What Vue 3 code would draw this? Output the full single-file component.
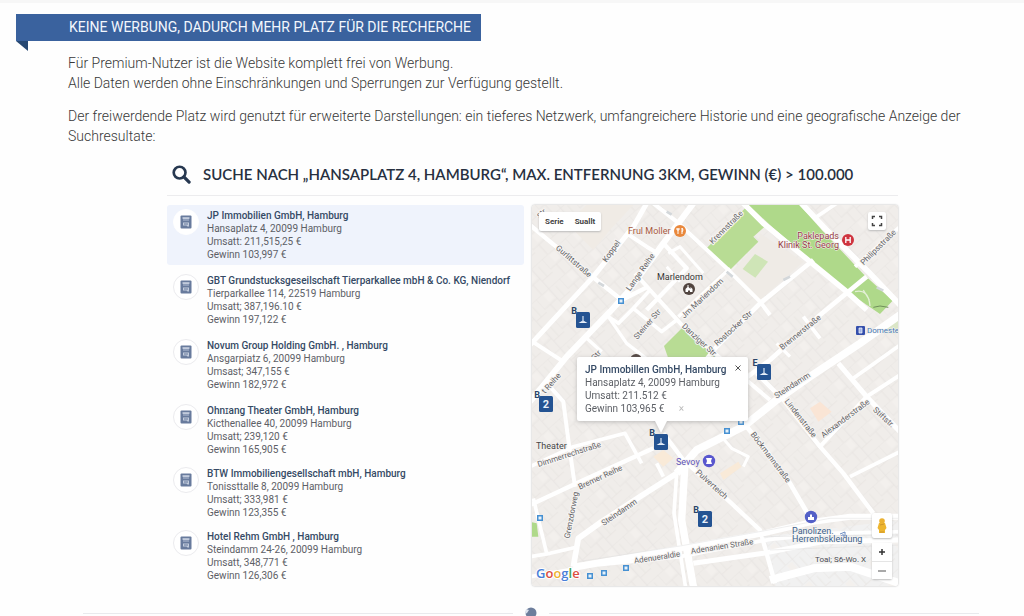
<script setup>
const companies = [
  { name: 'JP Immobilien GmbH, Hamburg', address: 'Hansaplatz 4, 20099 Hamburg', revenue: 'Umsatt: 211,515,25 €', profit: 'Gewinn 103,997 €', active: true },
  { name: 'GBT Grundstucksgeseilschaft Tierparkallee mbH & Co. KG, Niendorf', address: 'Tierparkallee 114, 22519 Hamburg', revenue: 'Umsatt; 387,196.10 €', profit: 'Gewinn 197,122 €' },
  { name: 'Novum Group Holding GmbH. , Hamburg', address: 'Ansgarpiatz 6, 20099 Hamburg', revenue: 'Umsast; 347,155 €', profit: 'Gewinn 182,972 €' },
  { name: 'Ohnɪang Theater GmbH, Hamburg', address: 'Kicthenallee 40, 20099 Hamburg', revenue: 'Umsatt; 239,120 €', profit: 'Gewinn 165,905 €' },
  { name: 'BTW Immobiliengesellschaft mbH, Hamburg', address: 'Tonissttalle 8, 20099 Hamburg', revenue: 'Umsatt; 333,981 €', profit: 'Gewinn 123,355 €' },
  { name: 'Hotel Rehm GmbH , Hamburg', address: 'Steindamm 24-26, 20099 Hamburg', revenue: 'Umsatt, 348,771 €', profit: 'Gewinn 126,306 €' },
]

const roads = [
  { w: 18, d: 'M0 605L110 470L240 335L290 280L400 130L490 10' },
  { w: 15, d: 'M0 435L60 370L190 230L310 80L350 10' },
  { w: 13, d: 'M0 75L60 125L200 240L275 300L350 262' },
  { w: 12, d: 'M290 100L350 140M350 140L375 155' },
  { w: 12, d: 'M370 10L440 65L590 205L690 305L720 345' },
  { w: 13, d: 'M400 130L470 205L350 330' },
  { w: 9, d: 'M415 160L450 140L520 220M410 200L450 245' },
  { w: 12, d: 'M315 220L360 270L460 380L560 465L720 600' },
  { w: 11, d: 'M360 270L310 325L265 370L235 350M310 325L395 395L440 360' },
  { w: 10, d: 'M235 350L290 430L380 500M170 415L215 455' },
  { w: 12, d: 'M0 420L100 485' },
  { w: 14, d: 'M480 540L560 440L690 310L850 180' },
  { w: 10, d: 'M445 350L600 205M740 430L780 470' },
  { w: 14, d: 'M640 540L720 480L870 345L1010 230' },
  { w: 16, d: 'M625 -5L700 70L950 275L1010 330' },
  { w: 17, d: 'M800 -5L880 80L1015 215L1110 315' },
  { w: 11, d: 'M975 200L1110 80M860 50L920 10' },
  { w: 23, d: 'M440 820L500 750L640 680L740 600L840 530L990 430L1110 345' },
  { w: 17, d: 'M440 820L330 890L215 965L145 1015L130 1100' },
  { w: 22, d: 'M465 790L455 960L492 1170' },
  { w: 11, d: 'M440 820L432 940L468 1170' },
  { w: 13, d: 'M400 700L460 780L540 850L690 990L735 1150' },
  { w: 14, d: 'M650 680L700 740L780 850L850 970' },
  { w: 13, d: 'M680 520L760 600L870 740L940 820L1030 940' },
  { w: 12, d: 'M870 740L1010 590L1110 525' },
  { w: 15, d: 'M925 490L1010 590L1110 695' },
  { w: 11, d: 'M970 535L1110 435M960 830L1110 755M820 350L870 415' },
  { w: 13, d: 'M0 915L140 850L370 745' },
  { w: 11, d: 'M0 800L130 740L285 700L335 790M380 790L400 830' },
  { w: 12, d: 'M60 560L100 605L115 720L135 860' },
  { w: 11, d: 'M10 895L50 1060M0 1070L60 1060L145 1040' },
  { w: 18, d: 'M130 1100L280 1075L450 1045L700 1000L850 965L960 950L1110 950' },
  { w: 11, d: 'M0 1130L200 1095L450 1070L720 1018L900 1000L1110 995' },
  { w: 15, d: 'M490 1090L700 1060L880 1025L1110 1020' },
  { w: 24, d: 'M720 1140L850 1105L960 1100L1110 1150' },
  { w: 9, d: 'M570 705L605 745L655 770L640 800' },
]

const labels = [
  { t: 'Gurlittstraße', x: 42, y: 56, r: 41 },
  { t: 'Koppel', x: 79, y: 46, r: -55 },
  { t: 'Lange Reihe', x: 108, y: 67, r: -55 },
  { t: 'Krennstraße', x: 194, y: 22, r: -45 },
  { t: 'Jm Mariendom', x: 170, y: 93, r: -43 },
  { t: 'Steiner Str', x: 115, y: 119, r: -49 },
  { t: 'Danziger Str.', x: 168, y: 135, r: 43 },
  { t: 'Rostocker Str', x: 201, y: 123, r: -42 },
  { t: 'Brennerstraße', x: 268, y: 127, r: -39 },
  { t: 'Philipsstraße', x: 346, y: 42, r: -45 },
  { t: 't Reihe', x: 19, y: 178, r: -48 },
  { t: 'Str', x: 64, y: 150, r: -48 },
  { t: 'Steindamm', x: 260, y: 180, r: -33 },
  { t: 'Lindenstraße', x: 269, y: 213, r: 52 },
  { t: 'Alexanderstraße', x: 313, y: 213, r: -37 },
  { t: 'Stiftstr.', x: 352, y: 212, r: 42 },
  { t: 'Böckmannstraße', x: 239, y: 252, r: 53 },
  { t: 'Dimmerrechstraße', x: 37, y: 249, r: -18 },
  { t: 'Bremer Reihe', x: 68, y: 272, r: -25 },
  { t: 'Steindamm', x: 87, y: 307, r: -34 },
  { t: 'Grenzdorweg', x: 39, y: 310, r: -79 },
  { t: 'Pulverteich', x: 180, y: 279, r: 42 },
  { t: 'Adenueraldie', x: 125, y: 352, r: -9 },
  { t: 'Adenanien Straße', x: 190, y: 341, r: -9 },
  { t: 'str', x: 9, y: 8, r: -38 },
]

const pins = [
  { x: 51, y: 115, letter: 'B' },
  { x: 14, y: 199, letter: 'B', digit: '2' },
  { x: 232, y: 167, letter: 'E' },
  { x: 129, y: 237, letter: 'B' },
  { x: 173, y: 314, letter: 'B', digit: '2' },
]

const stops = [[89, 96], [209, 217], [195, 226], [8, 313], [94, 363], [72, 368], [58, 371]]
</script>

<template>
  <main class="page">
    <h2 class="ribbon">KEINE WERBUNG, DADURCH MEHR PLATZ FÜR DIE RECHERCHE</h2>

    <section class="intro">
      <p>Für Premium-Nutzer ist die Website komplett frei von Werbung.<br>Alle Daten werden ohne Einschränkungen und Sperrungen zur Verfügung gestellt.</p>
      <p>Der freiwerdende Platz wird genutzt für erweiterte Darstellungen: ein tieferes Netzwerk, umfangreichere Historie und eine geografische Anzeige der Suchresultate:</p>
    </section>

    <section class="search">
      <header class="search-head">
        <svg class="lens" viewBox="0 0 20 20" aria-hidden="true">
          <circle cx="8" cy="8" r="6.2" fill="none" stroke="#273850" stroke-width="2.8" />
          <path d="M12.5 12.5L18 18" stroke="#273850" stroke-width="3.4" stroke-linecap="round" />
        </svg>
        <h1>SUCHE NACH „HANSAPLATZ 4, HAMBURG“, MAX. ENTFERNUNG 3KM, GEWINN (€) &gt; 100.000</h1>
      </header>

      <div class="results">
        <ul class="list">
          <li v-for="c in companies" :key="c.name" class="company" :class="{ active: c.active }">
            <span class="badge">
              <svg viewBox="0 0 12 14" aria-hidden="true">
                <rect x=".5" y=".5" width="11" height="13" rx="1" fill="#687b9d" />
                <path d="M3 3H9V6H3Z" fill="#8e9db9" />
                <path d="M2.500 3H9.500" stroke="#e4e9f3" stroke-width="1.200" />
                <path d="M3 7.500H9V11.500H7.500L6.500 10.500H3Z" fill="#c3cddd" />
                <path d="M4 9H8" stroke="#687b9d" />
              </svg>
            </span>
            <div class="facts">
              <strong>{{ c.name }}</strong>
              <span>{{ c.address }}</span>
              <span>{{ c.revenue }}</span>
              <span>{{ c.profit }}</span>
            </div>
          </li>
        </ul>

        <div class="map">
          <svg class="canvas" viewBox="0 0 366 381" preserveAspectRatio="xMidYMid slice" role="img" aria-label="Karte Hamburg">
            <defs>
              <pattern id="plots" width="94" height="78" patternUnits="userSpaceOnUse" patternTransform="rotate(-42)">
                <path d="M0 0H94M0 39H52M52 0V78M24 39V78M73 10V50M52 50H94M0 0V39" fill="none" stroke="#e6e2df" stroke-width="2" />
                <rect x="26" y="6" width="20" height="26" fill="#f3f0ed" />
              </pattern>
            </defs>
            <g transform="scale(.33333) translate(-6 -15)">
              <rect x="0" y="0" width="1120" height="1180" fill="#f0edea" />
              <path d="M700 1010L1110 960V1170H740Z" fill="#f1f1f1" />
              <rect x="0" y="0" width="1120" height="1180" fill="url(#plots)" />
              <path d="M840 625L870 605L905 635L865 665Z" fill="#fae5d5" />
              <path d="M570 820L625 785L635 800L580 840ZM370 770L400 750L430 775L400 800Z" fill="#f9ead8" />
              <path d="M240 90L310 15H170L110 70L190 150Z" fill="#f0ebe5" />
              <path d="M690 100L820 185L690 300L605 215L685 125Z" fill="#efebe6" />
              <path d="M645 25L710 75L670 110L685 125L600 210L530 145Z" fill="#b8dc94" />
              <path d="M675 162L714 185L676 233L638 207Z" fill="#cfe5b7" />
              <path d="M650 10H805L880 95L1000 222L1088 302L1050 342L945 270L720 75Z" fill="#afd98a" />
              <path d="M460 380L560 468L520 490H420L402 438Z" fill="#b8dc94" />
              <path d="M0 965L20 970L25 1010H0Z" fill="#afd98a" />
              <path d="M1060 385L1110 350V400L1065 400Z" fill="#dbe6c7" />
              <path v-for="r in roads" :key="r.d" :d="r.d" :stroke-width="r.w" fill="none" stroke="#fff" stroke-linejoin="round" />
              <path d="M145 1085L450 1038L700 993L900 955H1110M700 1010L1110 1005M720 1050L1110 1035" fill="none" stroke="#dfdede" stroke-width="1.500" />
              <path d="M975 275Q1015 265 1020 318M1000 270L1018 300" fill="none" stroke="#e4f0d7" stroke-width="4" />
              <path d="M1030 322L1050 318L1075 322" fill="none" stroke="#6f8f5a" stroke-width="3" />
              <path d="M590 215L608 230M760 240L780 230M1040 262L1060 272M205 248L222 258M410 35L425 44" stroke="#d3d7da" stroke-width="8" />
            </g>

            <g class="streets">
              <text v-for="l in labels" :key="l.t + l.x" :transform="`translate(${l.x} ${l.y}) rotate(${l.r})`" dy="3">{{ l.t }}</text>
            </g>

            <g v-for="s in stops" :key="s.join()">
              <rect :x="s[0] - 3" :y="s[1] - 3" width="6" height="6" fill="#4690d2" />
              <rect :x="s[0] - 1.5" :y="s[1] - 1.5" width="3" height="3" fill="#e6f1fa" />
            </g>

            <g class="places">
              <text x="96" y="29" fill="#a8593e">Frul Moller</text>
              <text x="125" y="75" fill="#353535">Marlendom</text>
              <text x="307" y="34" text-anchor="end" fill="#963c44">Paklepads</text>
              <text x="307" y="43" text-anchor="end" fill="#963c44">Klinik St. Georg</text>
              <text x="335" y="128" class="small" fill="#4779b5">Domeste</text>
              <text x="4" y="244" fill="#454545">Theater</text>
              <text x="144" y="260" fill="#6254b8">Sevoy</text>
              <text x="260" y="329" fill="#41638c">Panolizen.</text>
              <text x="260" y="337" fill="#41638c">Herrenbskleidung</text>
              <text x="283" y="357" class="small" fill="#484c53">Toal; S6-Wo. X</text>
            </g>
            <g>
              <circle cx="148" cy="26" r="6" fill="#e9883c" />
              <path d="M146 23V29M145 23V25H147V23M150 29V23Q152 25 150 27" fill="none" stroke="#fff" />
              <circle cx="157" cy="84" r="6" fill="#51443f" />
              <path d="M153.500 87V84L155.500 82V80H156.500V82L158.500 84V82L160.500 84V87H158V85.500H156V87Z" fill="#fff" />
              <circle cx="104" cy="155" r="6" fill="#51443f" />
              <circle cx="316" cy="35" r="6" fill="#cf3540" />
              <path d="M313.800 32V38M318.200 32V38M314 35H318" stroke="#fff" stroke-width="1.300" />
              <rect x="324" y="121" width="9" height="9" rx="1" fill="#354fac" />
              <path d="M327 123H330V128H327Z" fill="#9fb3e5" stroke="#fff" stroke-width=".7" />
              <circle cx="177" cy="256" r="6.200" fill="#5957ce" />
              <path d="M174 253H180L179 256L180 259H174L175 256Z" fill="#fff" />
              <circle cx="279" cy="312" r="6.200" fill="#5360c7" />
              <path d="M276 312H282V315H276ZM278 312V310L279 309L280 310V312" fill="#fff" />
              <path d="M308 329L313 327V331H311V329" fill="none" stroke="#6a8bc0" />
            </g>
            <g v-for="p in pins" :key="p.x" :transform="`translate(${p.x} ${p.y})`">
              <rect x="-7" y="-8" width="14" height="16" rx="1.500" fill="#245392" />
              <text v-if="p.digit" y="4" class="digit">{{ p.digit }}</text>
              <path v-else d="M0 -4V1L-2.500 2.500H2.500L0 1" fill="none" stroke="#e8f0fa" stroke-width="1.100" />
              <text x="-9" y="-6" class="pin-letter">{{ p.letter }}</text>
            </g>
          </svg>

          <div class="map-types">
            <button type="button">Serie</button>
            <button type="button">Suallt</button>
          </div>
          <button type="button" class="tool full" aria-label="Vollbild">
            <svg viewBox="0 0 12 12" aria-hidden="true"><path d="M1.500 4V1.500H4M8 1.500H10.500V4M10.500 8V10.500H8M4 10.500H1.500V8" fill="none" stroke="#444" stroke-width="1.500" /></svg>
          </button>
          <div class="tools">
            <button type="button" class="tool person" aria-label="Street View">
              <svg viewBox="0 0 12 18" aria-hidden="true"><circle cx="6" cy="4" r="2.800" fill="#eab132" /><path d="M3 6H9L10.500 11L9 13V16H3V13L1.500 11Z" fill="#edb52f" /><path d="M4 8L8 7M4 15H8" stroke="#ce962c" /></svg>
            </button>
            <div class="zoom">
              <button type="button" aria-label="Vergrößern"><svg viewBox="0 0 10 10" aria-hidden="true"><path d="M2 5H8M5 2V8" stroke="#333" stroke-width="1.500" /></svg></button>
              <button type="button" aria-label="Verkleinern"><svg viewBox="0 0 10 10" aria-hidden="true"><path d="M1 5H9" stroke="#555" stroke-width="1.200" /></svg></button>
            </div>
          </div>
          <div class="google"><i class="b">G</i><i class="r">o</i><i class="y">o</i><i class="b">g</i><i class="g">l</i><i class="r">e</i></div>

          <div class="popup">
            <strong>JP Immobillen GmbH, Hamburg</strong>
            <span>Hansaplatz 4, 20099 Hamburg</span>
            <span>Umsatt: 211.512 €</span>
            <span>Gewinn 103,965 € <em>×</em></span>
            <button type="button" aria-label="Schließen"><svg viewBox="0 0 8 8" aria-hidden="true"><path d="M1.500 1.500L6.500 6.500M6.500 1.500L1.500 6.500" stroke="#555" /></svg></button>
          </div>
        </div>
      </div>
    </section>

    <footer class="divider">
      <svg viewBox="0 0 12 12" aria-hidden="true"><circle cx="6" cy="6" r="5.500" fill="#6d7e9c" /><path d="M0 7L1 2L4 3L2 6Z" fill="#dce3ee" /></svg>
    </footer>
  </main>
</template>

<style>
html, body { background: #fefefe; overflow: hidden; }
</style>

<style scoped>
.page { font-family: Roboto, "Liberation Sans", sans-serif; color: #383838; border-top: 3px solid #f7f7f7; }
.page * { box-sizing: border-box; }
h1, h2, p, ul { margin: 0; padding: 0; }
button { border: 0; padding: 0; background: #fff; font-family: inherit; display: grid; place-items: center; }

.ribbon { position: relative; width: max-content; margin: 11px 0 0 16px; padding: 0 10px 0 53px; background: #3a629e; color: #f3f7fd; font-size: 14px; font-weight: 400; line-height: 27px; }
.ribbon::after { content: ""; position: absolute; left: 0; top: 100%; border: solid transparent; border-width: 0 12px 10px 0; border-right-color: #274873; }

.intro { margin: 12px 52px 0 68px; font-size: 14px; font-weight: 300; line-height: 20px; }
.intro p + p { margin-top: 13px; }

.search { margin: 13px 126px 0 167px; }
.search-head { display: flex; align-items: center; gap: 12px; height: 37px; padding: 0 0 6px 5px; border-bottom: 1px solid #ececee; }
.lens { width: 19px; height: 19px; flex: none; }
h1 { font: 600 15px/20px Lato, sans-serif; color: #273040; white-space: nowrap; }

.results { display: grid; grid-template-columns: 357fr 366fr; gap: 8px; margin-top: 9px; }
.list { list-style: none; }
.company { display: flex; gap: 8px; padding: 4px 6px; margin-bottom: 5px; border-radius: 3px; height: 60px; }
.company:nth-child(n + 4) { margin-bottom: 3px; }
.company:last-child { margin-bottom: 0; }
.company.active { background: #eff3fc; }
.badge { width: 26px; height: 26px; flex: none; border: 1px solid #ebebee; border-radius: 50%; background: #fff; display: grid; place-items: center; }
.active .badge { border-color: #fff; }
.badge svg { width: 12px; height: 14px; }
.facts, .popup { display: flex; flex-direction: column; font-size: 10px; line-height: 13px; white-space: nowrap; color: #5d6066; }
strong { font-weight: 500; color: #354a65; }

.map { position: relative; overflow: hidden; min-height: 381px; border-radius: 3px; box-shadow: 0 0 2px #aaa; }
.canvas { position: absolute; inset: 0; width: 100%; height: 100%; }
.streets text { font-size: 8px; text-anchor: middle; fill: #636366; paint-order: stroke; stroke: #f7f5f3; stroke-width: 2px; }
.places text { font-size: 9px; font-weight: 400; paint-order: stroke; stroke: #f5f3f1; stroke-width: 1px; }
.places .small { font-size: 8px; }
.digit { font-size: 11px; font-weight: 700; fill: #e8f0fa; text-anchor: middle; }
.pin-letter { font-size: 9px; font-weight: 700; fill: #2b4568; text-anchor: middle; }

.map-types { position: absolute; left: 7px; top: 7px; display: flex; gap: 11px; height: 19px; padding: 0 6px; background: #fff; border-radius: 2px; box-shadow: 0 1px 2px #bbb; }
.map-types button { font-size: 8px; font-weight: 700; color: #444; }
.tool { background: #fff; border-radius: 2px; box-shadow: 0 1px 2px #bbb; }
.full { position: absolute; right: 12px; top: 7px; width: 18px; height: 18px; }
.full svg { width: 12px; height: 12px; }
.tools { position: absolute; right: 6px; bottom: 7px; display: grid; gap: 5px; }
.person { width: 20px; height: 25px; }
.person svg { width: 12px; height: 18px; }
.zoom { background: #fff; border-radius: 2px; box-shadow: 0 1px 2px #bbb; }
.zoom button { width: 20px; height: 18px; }
.zoom button + button { border-top: 1px solid #e5e5e5; }
.zoom svg { width: 10px; height: 10px; }
.google { position: absolute; left: 4px; bottom: 4px; font: 600 13px/18px "Open Sans", sans-serif; -webkit-text-stroke: 2px #fff; paint-order: stroke; }
.google i { font-style: normal; }
.b { color: #4a7ed8; } .r { color: #db4d40; } .y { color: #eeb22e; } .g { color: #45a35b; }

.popup { position: absolute; left: 45px; top: 152px; width: 171px; padding: 6px 8px; background: #fff; border-radius: 2px; filter: drop-shadow(0 1px 2px #9999); }
.popup::after { content: ""; position: absolute; left: 78px; top: 100%; border: solid transparent; border-width: 12px 6px 0; border-top-color: #fff; }
.popup em { margin-left: 12px; color: #bbb; font-style: normal; }
.popup button { position: absolute; right: 5px; top: 6px; width: 10px; height: 10px; }
.popup button svg { width: 8px; height: 8px; }

.divider { display: flex; align-items: center; gap: 12px; margin: 21px 45px 0 83px; }
.divider::before, .divider::after { content: ""; flex: 1; height: 1px; background: #e9eaed; }
.divider svg { width: 12px; height: 12px; }
</style>
